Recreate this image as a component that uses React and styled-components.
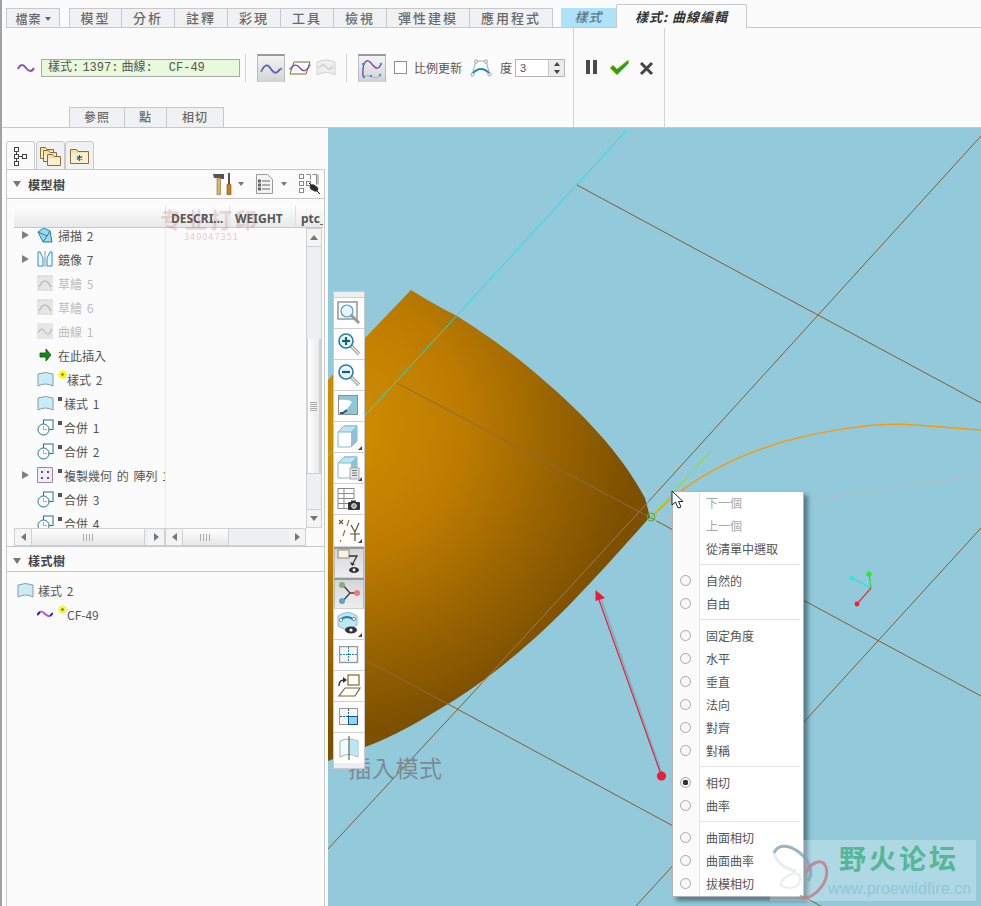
import React from "react";
import styled, { createGlobalStyle } from "styled-components";

const CJK = `"Noto Sans CJK TC", "Noto Sans", sans-serif`;

const GlobalStyle = createGlobalStyle`
  html, body { margin: 0; padding: 0; background: #fbfbfb; }
  body { font-family: ${CJK}; font-size: 12px; color: #4d4d4d; }
`;

const TABS = ["模型", "分析", "註釋", "彩現", "工具", "檢視"];
const WIDE_TABS = ["彈性建模", "應用程式"];

const TREE_ROWS = [
  { label: "掃描 2", icon: "sweep", arrow: true },
  { label: "鏡像 7", icon: "mirror", arrow: true },
  { label: "草繪 5", icon: "sketch", off: true },
  { label: "草繪 6", icon: "sketch", off: true },
  { label: "曲線 1", icon: "curve", off: true },
  { label: "在此插入", icon: "insert" },
  { label: "樣式 2", icon: "style", mark: "new" },
  { label: "樣式 1", icon: "style", mark: "dot" },
  { label: "合併 1", icon: "merge", mark: "dot" },
  { label: "合併 2", icon: "merge", mark: "dot" },
  { label: "複製幾何 的 陣列 1", icon: "pattern", mark: "dot", arrow: true },
  { label: "合併 3", icon: "merge", mark: "dot" },
  { label: "合併 4", icon: "merge", mark: "dot" },
];

const MENU = [
  [
    { label: "下一個", off: true },
    { label: "上一個", off: true },
    { label: "從清單中選取" },
  ],
  [
    { label: "自然的", radio: true },
    { label: "自由", radio: true },
  ],
  [
    { label: "固定角度", radio: true },
    { label: "水平", radio: true },
    { label: "垂直", radio: true },
    { label: "法向", radio: true },
    { label: "對齊", radio: true },
    { label: "對稱", radio: true },
  ],
  [
    { label: "相切", radio: true, on: true },
    { label: "曲率", radio: true },
  ],
  [
    { label: "曲面相切", radio: true },
    { label: "曲面曲率", radio: true },
    { label: "拔模相切", radio: true },
  ],
];

/* ---------- icons ---------- */

const Wave = ({ w = 18, h = 10, color = "#8a4fb0", sw = 2 }) => (
  <svg width={w} height={h} viewBox="0 0 18 10">
    <path d="M1 6C3 1 6 1 9 5s6 4 8 0" fill="none" stroke={color} strokeWidth={sw} />
  </svg>
);

const CurveNode = () => (
  <svg width="16" height="8" viewBox="0 0 16 8">
    <path d="M1 4C3 1 5 1 7 3s4 4 6 3" fill="none" stroke="#c050d0" strokeWidth="1.8" />
    <path d="M0 5L3 2M13 6L16 3" stroke="#1a1ae0" strokeWidth="1.8" />
  </svg>
);

const NewStar = () => (
  <svg width="9" height="9" viewBox="0 0 9 9">
    <path d="M4.500 0v9M0 4.500h9M1.200 1.200l6.600 6.600M7.800 1.200L1.200 7.800" stroke="#f8f000" strokeWidth="1.3" />
    <rect x="3.500" y="3.500" width="2" height="2" fill="#5a5a20" />
  </svg>
);

const WaveDots = () => (
  <svg width="24" height="16" viewBox="0 0 24 16">
    <path d="M3 9C6 3 9 3 12 8s6 5 9 0" fill="none" stroke="#7d45b0" strokeWidth="1.6" />
    <g fill="#2a9fd8">
      <circle cx="2.5" cy="10" r="1.2" />
      <circle cx="9" cy="5" r="1.2" />
      <circle cx="15" cy="11" r="1.2" />
      <circle cx="22" cy="8" r="1.2" />
    </g>
  </svg>
);

const PlaneCurve = () => (
  <svg width="22" height="16" viewBox="0 0 22 16">
    <path d="M5 2H21L17 14H1Z" fill="none" stroke="#8a6a2c" strokeWidth="1" />
    <path d="M1 9C5 4 8 4 11 8s6 4 10-3" fill="none" stroke="#7d45b0" strokeWidth="1.3" />
    <circle cx="1.5" cy="9" r="1" fill="#2a9fd8" />
    <circle cx="20.5" cy="5" r="1" fill="#2a9fd8" />
  </svg>
);

const SurfaceCurve = () => (
  <svg width="20" height="18" viewBox="0 0 20 18">
    <path d="M1 3Q10 -1 19 3V16Q10 11 1 16Z" fill="#eee" stroke="#d2d2d2" />
    <path d="M3 9C6 5 8 5 10 8s5 3 7 -1" fill="none" stroke="#c9c9c9" strokeWidth="1.3" />
  </svg>
);

const ControlCurve = () => (
  <svg width="24" height="24" viewBox="0 0 24 24">
    <path d="M3 20C2 4 7 1 11 6s7 8 10 1" fill="none" stroke="#7d45b0" strokeWidth="1.4" />
    <path d="M3 20c6-5 12 5 18-2" fill="none" stroke="#bbb" strokeWidth="1.4" />
    <g fill="#2a9fd8">
      <circle cx="3" cy="7" r="1.2" />
      <circle cx="21" cy="7" r="1.2" />
      <circle cx="4" cy="20" r="1.2" />
      <circle cx="11" cy="19" r="1.2" />
      <circle cx="20" cy="18" r="1.2" />
    </g>
  </svg>
);

const DegreeIcon = () => (
  <svg width="22" height="18" viewBox="0 0 22 18">
    <path d="M2 16L6 2H16L20 16" fill="none" stroke="#aaa" />
    <path d="M2 15Q11 5 20 15" fill="none" stroke="#1f8ac0" strokeWidth="1.8" />
    <g fill="#fff" stroke="#999">
      <circle cx="2.5" cy="15.5" r="1.6" />
      <circle cx="6" cy="2.5" r="1.6" />
      <circle cx="16" cy="2.5" r="1.6" />
      <circle cx="19.5" cy="15.5" r="1.6" />
    </g>
  </svg>
);

const TreeTabIcon = () => (
  <svg width="15" height="20" viewBox="0 0 15 20">
    <g fill="#fff" stroke="#444">
      <rect x="1.5" y="1.5" width="4" height="4" />
      <rect x="1.5" y="8.5" width="4" height="4" />
      <rect x="9.5" y="8.5" width="4" height="4" />
      <rect x="1.5" y="15.5" width="4" height="4" />
    </g>
    <path d="M3.5 5.5v3M3.5 12.5v3M5.5 10.5h4" stroke="#444" />
  </svg>
);

const Folder = ({ x = 0, y = 0 }) => (
  <g transform={`translate(${x} ${y})`}>
    <path d="M.5 2.5h5l1.5 2h6.5v9H.5Z" fill="#f7dfa8" stroke="#8a6d3b" />
    <path d="M1 6h12v7H1Z" fill="#fbeecb" />
  </g>
);

const FoldersIcon = () => (
  <svg width="21" height="21" viewBox="0 0 21 21">
    <Folder />
    <Folder x={3} y={3} />
    <Folder x={7} y={7} />
  </svg>
);

const FolderStarIcon = () => (
  <svg width="19" height="17" viewBox="0 0 19 17">
    <path d="M.5 2.5h6l1.5 2h10.5v12H.5Z" fill="#f7dfa8" stroke="#8a6d3b" />
    <path d="M1 6h17v10H1Z" fill="#fcefcf" />
    <path d="M9.5 8v6M6.8 9.5l5.4 3M12.2 9.5l-5.4 3" stroke="#0d5f8a" strokeWidth="1.2" />
  </svg>
);

const ToolsIcon = () => (
  <svg width="20" height="22" viewBox="0 0 20 22">
    <path d="M0 1h11v5H8L7 5H1Z" fill="#555" />
    <rect x="4" y="5" width="3.6" height="17" fill="#d7b56d" stroke="#8a6d3b" strokeWidth=".6" />
    <rect x="15" y="0" width="2" height="11" fill="#555" />
    <rect x="14" y="11" width="4" height="11" rx="1" fill="#c77f1a" stroke="#7a4e10" strokeWidth=".6" />
  </svg>
);

const ListIcon = () => (
  <svg width="17" height="20" viewBox="0 0 17 20">
    <path d="M.5.5h11l5 5v14H.5Z" fill="#f4f4f4" stroke="#9a9a9a" />
    <path d="M6 7h8M6 11h8M6 15h8" stroke="#666" />
    <g fill="none" stroke="#666">
      <rect x="2.5" y="6" width="2" height="2" />
      <rect x="2.5" y="10" width="2" height="2" />
      <rect x="2.5" y="14" width="2" height="2" />
    </g>
  </svg>
);

const TreeEyeIcon = () => (
  <svg width="22" height="20" viewBox="0 0 22 20">
    <g fill="#fff" stroke="#8a8a8a">
      <rect x=".5" y=".5" width="4" height="4" />
      <rect x=".5" y="7.5" width="4" height="4" />
      <rect x=".5" y="14.5" width="4" height="4" />
      <rect x="7.5" y="7.5" width="4" height="4" />
      <path d="M7.5.5h4v5M13.5.5h4v10M19 .5v10" fill="none" />
    </g>
    <ellipse cx="15" cy="14" rx="4.5" ry="3" fill="#333" transform="rotate(30 15 14)" />
    <path d="M10 9l11 11" stroke="#111" />
  </svg>
);

const NODE_ICONS = {
  sweep: (
    <svg width="16" height="16" viewBox="0 0 16 16">
      <path d="M1 5L7 1l6 3 2 11H6Z" fill="#9ed8ee" stroke="#1f7fa8" />
      <path d="M1 5l9 4 3-5M10 9l-4 6" fill="none" stroke="#1f7fa8" />
    </svg>
  ),
  mirror: (
    <svg width="16" height="16" viewBox="0 0 16 16">
      <path d="M1 15V1h2l3 6v8Z" fill="#eaf7fc" stroke="#2b93bd" />
      <path d="M15 15V1h-2l-3 6v8Z" fill="#eaf7fc" stroke="#2b93bd" />
      <path d="M8 0v16" stroke="#999" />
    </svg>
  ),
  sketch: (
    <svg width="16" height="16" viewBox="0 0 16 16">
      <rect width="16" height="16" fill="#e6e6e6" />
      <path d="M1.500 1.500h13M1.500 14.500h13" stroke="#c8c8c8" strokeDasharray="1 3" />
      <path d="M2 12Q8 0 14 12" fill="none" stroke="#c4c0ae" strokeWidth="1.6" />
    </svg>
  ),
  curve: (
    <svg width="16" height="16" viewBox="0 0 16 16">
      <rect width="16" height="16" fill="#e6e6e6" />
      <path d="M1 10c3-6 5-4 7-1s5 3 7-3" fill="none" stroke="#c4c0ae" strokeWidth="1.2" />
    </svg>
  ),
  insert: (
    <svg width="16" height="16" viewBox="0 0 16 16">
      <path d="M3 6h6V2l5 6-5 6v-4H3Z" fill="#118a11" stroke="#0a4f0a" strokeWidth=".8" />
    </svg>
  ),
  style: (
    <svg width="17" height="16" viewBox="0 0 17 16">
      <path d="M1 3Q8.5 0 16 3V15Q8.5 11 1 15Z" fill="#c9ecfa" stroke="#8b9aa2" />
    </svg>
  ),
  merge: (
    <svg width="17" height="17" viewBox="0 0 17 17">
      <rect x="6.5" y="1" width="9.5" height="9.5" fill="#fff" stroke="#25708f" />
      <circle cx="6.5" cy="10.5" r="5.5" fill="#fff" stroke="#25708f" />
      <path d="M6.5 7v3.5H10" fill="none" stroke="#8fb7c6" />
    </svg>
  ),
  pattern: (
    <svg width="16" height="16" viewBox="0 0 16 16">
      <path d="M.5.5h15v15H.5Z" fill="#f2eef8" stroke="#9a8aa8" />
      <path d="M4 4h2v2H4ZM10 4h2v2h-2ZM4 10h2v2H4ZM10 10h2v2h-2Z" fill="#6a4aa0" />
    </svg>
  ),
};

const Mag = ({ sign }) => (
  <svg width="24" height="24" viewBox="0 0 24 24">
    <path d="M14 14l8 8" stroke="#999" strokeWidth="3.4" />
    <path d="M14 14l8 8" stroke="#eee" strokeWidth="1.4" />
    <circle cx="9" cy="9" r="7" fill="#e8f7fc" stroke="#2b7d9d" strokeWidth="1.6" />
    {sign && <path d="M5 9h8" stroke="#155f80" strokeWidth="2.2" />}
    {sign === "+" && <path d="M9 5v8" stroke="#155f80" strokeWidth="2.2" />}
  </svg>
);

const Corner = () => <path d="M26 26h-4l4-4Z" fill="#444" />;

const TOOL_ICONS = [
  <svg width="24" height="24" viewBox="0 0 24 24" key="fit">
    <rect x="1" y="1" width="19" height="17" fill="#fff" stroke="#8e8e8e" strokeWidth="1.4" />
    <path d="M14 14l8 8" stroke="#999" strokeWidth="3" />
    <circle cx="10" cy="10" r="6" fill="#e4f5fb" stroke="#5a9ab5" strokeWidth="1.2" />
  </svg>,
  <Mag sign="+" key="in" />,
  <Mag sign="-" key="out" />,
  <svg width="22" height="22" viewBox="0 0 22 22" key="view">
    <rect x=".5" y=".5" width="19" height="19" fill="#8fc6d8" stroke="#8e8e8e" />
    <path d="M1 5Q11 4 14 7L6 19H1Z" fill="#fff" />
    <path d="M15 7L7 18" fill="none" stroke="#8fc6d8" strokeWidth="1" />
    <path d="M9 15L5 18H2" fill="none" stroke="#135a7c" strokeWidth="2" />
  </svg>,
  <svg width="26" height="26" viewBox="0 0 26 26" key="cube">
    <path d="M2 8L8 2H21V17L15 23H2Z" fill="#fff" stroke="#7fb9d2" />
    <path d="M2 8H15L21 2H8Z" fill="#bfe4f2" stroke="#7fb9d2" />
    <path d="M15 8V23L21 17V2Z" fill="#8cc3d8" />
    <Corner />
  </svg>,
  <svg width="26" height="26" viewBox="0 0 26 26" key="cube-list">
    <path d="M2 8L8 2H21V17L15 23H2Z" fill="#fff" stroke="#7fb9d2" />
    <path d="M2 8H15L21 2H8Z" fill="#bfe4f2" stroke="#7fb9d2" />
    <path d="M15 8V14L21 14V2Z" fill="#8cc3d8" />
    <rect x="14" y="13" width="9" height="11" fill="#e6e6e6" stroke="#aaa" />
    <path d="M16 15.5h5M16 18h5M16 20.5h5" stroke="#777" />
    <Corner />
  </svg>,
  <svg width="26" height="26" viewBox="0 0 26 26" key="table">
    <path d="M2 2.5h16M2 7.5h16M2 12.5h16M2 17.5h14M2 22.5h10M2 2v21M8 3v20M18 2v11" stroke="#8b8b8b" fill="none" />
    <rect x="12" y="16" width="12" height="8" rx="1" fill="#333" />
    <rect x="15" y="14.5" width="5" height="2" fill="#333" />
    <circle cx="18" cy="20" r="2.4" fill="#999" stroke="#fff" strokeWidth=".8" />
  </svg>,
  <svg width="26" height="26" viewBox="0 0 26 26" key="datum">
    <path d="M3 3l4 4M7 3l-4 4" stroke="#6d5a2c" strokeWidth="1.2" />
    <path d="M13 3l-2 6M9 13l-2 6M5 23l-1 2" stroke="#9a7a2c" strokeWidth="1.2" />
    <path d="M15 8l4 7 4-9M19 15v9M14 17h10" fill="none" stroke="#5f4e25" strokeWidth="1.2" />
    <Corner />
  </svg>,
  <svg width="25" height="25" viewBox="0 0 25 25" key="box-eye">
    <rect x="1" y="1" width="11" height="8" fill="#fdf1d8" stroke="#8a8a8a" />
    <path d="M12 7h8L15 16" fill="none" stroke="#333" strokeWidth="1.3" />
    <path d="M13 13l2 4 3-2Z" fill="#333" />
    <ellipse cx="17" cy="21" rx="5" ry="3" fill="#333" />
    <circle cx="17" cy="21" r="1.4" fill="#fff" />
  </svg>,
  <svg width="24" height="24" viewBox="0 0 24 24" key="nodes">
    <path d="M5 3l8 9h8M13 12l-8 9" stroke="#444" strokeWidth="1.4" fill="none" />
    <circle cx="5" cy="4" r="3" fill="#7fb07a" />
    <circle cx="20" cy="12" r="3" fill="#e87c78" />
    <circle cx="5" cy="20" r="3" fill="#5fa3c8" />
  </svg>,
  <svg width="26" height="26" viewBox="0 0 26 26" key="surf-eye">
    <path d="M2 5Q12 -2 21 5V14L12 20 2 15Z" fill="#bfe6f5" stroke="#8fb9ca" />
    <path d="M4 9Q11 3 18 9" fill="none" stroke="#1f7fa8" strokeWidth="1.8" />
    <circle cx="5" cy="9" r="1.6" fill="#fff" stroke="#888" />
    <circle cx="18" cy="8" r="1.6" fill="#fff" stroke="#888" />
    <ellipse cx="15" cy="19" rx="6" ry="3.4" fill="#333" />
    <circle cx="15" cy="19" r="1.6" fill="#fff" />
    <Corner />
  </svg>,
  <svg width="20" height="18" viewBox="0 0 20 18" key="plane">
    <rect x=".5" y=".5" width="18" height="16" fill="#f6f6f6" stroke="#999" strokeWidth="1.4" />
    <path d="M1 8.5h17M9.5 1v15" stroke="#1c88bd" strokeDasharray="2 1" />
  </svg>,
  <svg width="24" height="24" viewBox="0 0 24 24" key="rotate">
    <rect x="11" y="1" width="11" height="10" fill="#fff" stroke="#7d6635" strokeWidth="1.2" />
    <path d="M8 14h15l-5 8H2Z" fill="#fff" stroke="#7d6635" strokeWidth="1.2" />
    <path d="M2 12Q2 6 7 6" fill="none" stroke="#333" strokeWidth="1.4" />
    <path d="M6 3l4 3-4 3Z" fill="#333" />
  </svg>,
  <svg width="20" height="18" viewBox="0 0 20 18" key="quad">
    <rect x=".5" y=".5" width="18" height="16" fill="#f6f6f6" stroke="#999" />
    <rect x="9.5" y="8.5" width="9" height="8" fill="#8fd4f2" stroke="#135a7c" />
    <path d="M1 8.5h17M9.5 1v15" stroke="#135a7c" strokeDasharray="2 1" />
  </svg>,
  <svg width="20" height="24" viewBox="0 0 20 24" key="surf-line">
    <path d="M1 5Q10 1 19 5V21Q10 16 1 21Z" fill="#f2fbfe" stroke="#a0b0b8" />
    <path d="M10.500 4Q15 4 18.500 5.500V20Q15 17.500 10.500 17.500Z" fill="#b7e6f8" />
    <path d="M10 0V24" stroke="#4a4a2a" />
  </svg>,
];

/* ---------- page ---------- */

const Page = styled.div`
  width: 981px;
  height: 906px;
  overflow: hidden;
  display: flex;
  flex-direction: column;
  border-left: 2px solid #a2a2a2;
  box-sizing: border-box;
  background: #fbfbfb;
`;

const Head = styled.header`
  padding-left: 4px;
  border-bottom: 1px solid #c6c8ca;
`;

const TabRow = styled.div`
  display: flex;
  align-items: flex-end;
  height: 27px;
  border-bottom: 1px solid #c6c8ca;
`;

const FileTab = styled.div`
  width: 54px;
  height: 19px;
  box-sizing: border-box;
  border: 1px solid #c6c8ca;
  border-bottom: 0;
  background: #f0f1f2;
  display: flex;
  align-items: center;
  justify-content: center;
  gap: 3px;
  margin-right: 9px;
  color: #6a6a6a;
  font-size: 12px;
  font-weight: 500;
  letter-spacing: 1px;
  &::after {
    content: "";
    border: 3px solid transparent;
    border-top: 4px solid #666;
    margin-top: 4px;
  }
`;

const Tab = styled.div`
  width: ${(p) => p.$w}px;
  height: 19px;
  box-sizing: border-box;
  border: 1px solid #c6c8ca;
  border-left-width: ${(p) => (p.$first ? 1 : 0)}px;
  border-bottom: 0;
  background: #f0f1f2;
  text-align: center;
  line-height: 18px;
  color: #6a6a6a;
  font-size: 13px;
  font-weight: 500;
  letter-spacing: 2px;
`;

const ContextTab = styled.div`
  margin-left: 8px;
  width: 55px;
  height: 19px;
  background: #ade2fb;
  text-align: center;
  line-height: 18px;
  color: #647480;
  font-size: 13px;
  font-weight: 500;
  font-style: italic;
  letter-spacing: 1px;
`;

const ActiveTab = styled.div`
  width: 131px;
  height: 24px;
  box-sizing: border-box;
  margin-bottom: -1px;
  border: 1px solid #c6c8ca;
  border-bottom: 0;
  border-radius: 2px 2px 0 0;
  background: #fbfbfb;
  text-align: center;
  line-height: 23px;
  color: #333;
  font-size: 13px;
  font-weight: 700;
  font-style: italic;
  letter-spacing: 1px;
`;

const RibbonBody = styled.div`
  display: flex;
  height: 99px;
`;

const MainGroup = styled.div`
  width: 567px;
  display: flex;
  flex-direction: column;
  border-right: 1px solid #d2d3d4;
`;

const Controls = styled.div`
  flex: 1;
  display: flex;
  align-items: center;
  padding-left: 11px;
`;

const StatusField = styled.div`
  width: 199px;
  height: 18px;
  margin-left: 6px;
  box-sizing: border-box;
  border: 1px solid #a9a9a9;
  background: #e9f9dc;
  padding-left: 6px;
  line-height: 16px;
  font-size: 12px;
  font-family: "Liberation Mono", ${CJK};
  word-spacing: -4px;
  color: #555;
  white-space: pre;
`;

const Sep = styled.div`
  width: 1px;
  height: 28px;
  background: #d5d6d7;
  margin: 0 ${(p) => p.$r}px 0 ${(p) => p.$l}px;
`;

const IconSlot = styled.div`
  width: ${(p) => p.$w}px;
  margin-left: ${(p) => p.$ml || 0}px;
  display: flex;
  align-items: center;
  justify-content: center;
`;

const PressedBtn = styled.div`
  width: 28px;
  height: 28px;
  box-sizing: border-box;
  border-top: 2px solid #9a9a9a;
  border-left: 1px solid #bbb;
  border-right: 1px solid #bbb;
  background: linear-gradient(#f4f4f5, #d2d3d5);
  display: flex;
  align-items: center;
  justify-content: center;
`;

const CheckBox = styled.div`
  width: 13px;
  height: 13px;
  margin-left: 8px;
  border: 1px solid #8e8e8e;
  box-sizing: border-box;
  background: #fff;
`;

const Label = styled.span`
  margin-left: ${(p) => p.$ml}px;
  font-size: 12px;
  color: #555;
  white-space: nowrap;
`;

const Spinner = styled.div`
  margin-left: 3px;
  width: 50px;
  height: 18px;
  box-sizing: border-box;
  border: 1px solid #b5b5b5;
  background: #fff;
  display: flex;
  font-family: "Liberation Sans", sans-serif;
  font-size: 11px;
  line-height: 16px;
  color: #555;
`;

const SpinValue = styled.div`
  flex: 1;
  padding-left: 4px;
`;

const SpinButtons = styled.div`
  width: 15px;
  border-left: 1px solid #c6c6c6;
  background: #ececec;
  display: flex;
  flex-direction: column;
  align-items: center;
  justify-content: space-around;
`;

const SpinUp = styled.i`
  border: 3px solid transparent;
  border-top: 0;
  border-bottom: 4px solid #444;
`;

const SpinDown = styled.i`
  border: 3px solid transparent;
  border-bottom: 0;
  border-top: 4px solid #444;
`;

const SubTabs = styled.div`
  display: flex;
  height: 20px;
  padding-left: 63px;
`;

const SubTab = styled.div`
  width: ${(p) => p.$w}px;
  box-sizing: border-box;
  border: 1px solid #c6c8ca;
  border-bottom: 0;
  border-left-width: ${(p) => (p.$first ? 1 : 0)}px;
  background: #f0f1f2;
  text-align: center;
  line-height: 18px;
  font-size: 12px;
  font-weight: 500;
  letter-spacing: 1px;
  color: #6a6a6a;
`;

const ConfirmGroup = styled.div`
  width: 91px;
  height: 100%;
  box-sizing: border-box;
  border-right: 1px solid #d2d3d4;
  padding: 31px 0 0 11px;
  display: flex;
  align-items: flex-start;
`;

const Body = styled.main`
  flex: 1;
  min-height: 0;
  display: flex;
  padding-left: 4px;
`;

const Side = styled.aside`
  width: 319px;
  margin-right: 3px;
  padding-top: 13px;
  flex-shrink: 0;
  display: flex;
  flex-direction: column;
`;

const SideTabs = styled.div`
  display: flex;
  height: 29px;
  margin-bottom: -1px;
  position: relative;
`;

const SideTab = styled.div`
  width: 29px;
  height: 29px;
  box-sizing: border-box;
  border: 1px solid #c6c8ca;
  border-bottom: ${(p) => (p.$active ? "1px solid #fbfbfb" : "1px solid #c6c8ca")};
  border-radius: 3px 3px 0 0;
  margin-right: ${(p) => (p.$active ? 1 : 0)}px;
  background: ${(p) => (p.$active ? "#fbfbfb" : "#f0f1f2")};
  display: flex;
  align-items: center;
  justify-content: center;
`;

const SidePanel = styled.div`
  flex: 1;
  min-height: 0;
  border: 1px solid #c6c8ca;
  border-bottom: 0;
  display: flex;
  flex-direction: column;
  position: relative;
`;

const SectionHead = styled.div`
  height: ${(p) => p.$h}px;
  flex-shrink: 0;
  box-sizing: border-box;
  display: flex;
  align-items: center;
  padding: ${(p) => p.$pt || 0}px 0 0 6px;
  border-bottom: 1px solid #c6c8ca;
  font-size: 12px;
  font-weight: 700;
  letter-spacing: .5px;
  color: #444;
  &::before {
    content: "";
    border: 4px solid transparent;
    border-top: 6px solid #777;
    border-bottom: 0;
    margin-right: 7px;
  }
`;

const SectionTools = styled.div`
  margin-left: auto;
  display: flex;
  align-items: center;
  padding-right: 3px;
`;

const SmallCaret = styled.i`
  border: 3.5px solid transparent;
  border-top: 4px solid #777;
  border-bottom: 0;
  margin: 0 ${(p) => p.$r}px 0 ${(p) => p.$l}px;
`;

const TreeArea = styled.div`
  height: 348px;
  flex-shrink: 0;
  padding: 7px 1px 0 7px;
  display: flex;
  flex-direction: column;
  border-bottom: 1px solid #c6c8ca;
  box-sizing: border-box;
`;

const ColumnHead = styled.div`
  height: 22px;
  flex-shrink: 0;
  display: grid;
  grid-template-columns: 151px 64px 66px 1fr;
  background: linear-gradient(#fdfdfd, #e8e9ea);
  border-bottom: 1px solid #c6c8ca;
  box-sizing: border-box;
  font-family: "Noto Sans", sans-serif;
  font-size: 12px;
  font-weight: 700;
  color: #555;
  line-height: 25px;
  overflow: hidden;
`;

const ColumnCell = styled.div`
  border-left: 1px solid #dfe0e1;
  padding-left: 5px;
  white-space: nowrap;
  overflow: hidden;
`;

const ColumnBlank = styled.div``;

const TreeBody = styled.div`
  height: 300px;
  display: grid;
  grid-template-columns: 151px 141px 16px;
  flex-shrink: 0;
`;

const NameColumn = styled.div`
  overflow: hidden;
  padding-top: 1px;
`;

const TreeRow = styled.div`
  height: 24px;
  margin-top: ${(p) => (p.$first ? -6 : 0)}px;
  display: flex;
  align-items: center;
  white-space: nowrap;
  font-size: 12px;
  word-spacing: 2px;
  color: ${(p) => (p.$off ? "#bcbcbc" : "#555")};
`;

const Expander = styled.div`
  width: 23px;
  padding-left: 8px;
  box-sizing: border-box;
  flex-shrink: 0;
  &::before {
    content: "";
    display: ${(p) => (p.$show ? "block" : "none")};
    width: 0;
    border: 4.5px solid transparent;
    border-left: 7px solid #808080;
    border-right: 0;
  }
`;

const NodeIcon = styled.div`
  width: 21px;
  flex-shrink: 0;
  display: flex;
  align-items: center;
  opacity: ${(p) => (p.$off ? 0.9 : 1)};
`;

const DotMark = styled.i`
  width: 4px;
  height: 4px;
  background: #555;
  align-self: flex-start;
  margin: 6px 2px 0 0;
  flex-shrink: 0;
`;

const NewMark = styled.span`
  align-self: flex-start;
  margin: 3px 0 0 0;
  width: 9px;
  height: 9px;
  line-height: 0;
  flex-shrink: 0;
`;

const EmptyColumn = styled.div`
  border-left: 1px solid #e6e9ee;
`;

const VScroll = styled.div`
  background: #eeeff0;
  border: 1px solid #d0d1d2;
  box-sizing: border-box;
  display: flex;
  flex-direction: column;
  align-items: stretch;
`;

const ScrollBtn = styled.div`
  height: ${(p) => p.$h || 17}px;
  background: #f4f4f5;
  display: flex;
  align-items: center;
  justify-content: center;
  flex-shrink: 0;
  border-bottom: ${(p) => (p.$top ? "1px solid #d0d1d2" : 0)};
  border-top: ${(p) => (p.$bottom ? "1px solid #d0d1d2" : 0)};
  margin-top: ${(p) => (p.$bottom ? "auto" : 0)};
`;

const ThumbV = styled.div`
  margin-top: 92px;
  height: 135px;
  background: linear-gradient(90deg, #fff, #e9e9e9);
  border: 1px solid #d0d1d2;
  border-width: 0 2px 1px 1px;
  box-sizing: border-box;
  display: flex;
  align-items: center;
  justify-content: center;
  &::after {
    content: "";
    width: 7px;
    height: 9px;
    background: repeating-linear-gradient(#aaa 0 1px, transparent 1px 2px);
  }
`;

const HScrollRow = styled.div`
  display: grid;
  grid-template-columns: 151px 141px;
  height: 19px;
`;

const HScroll = styled.div`
  display: flex;
  align-items: stretch;
  background: #eeeff0;
  border: 1px solid #d0d1d2;
  box-sizing: border-box;
`;

const HBtn = styled.div`
  width: 16px;
  flex-shrink: 0;
  background: #f4f4f5;
  display: flex;
  align-items: center;
  justify-content: center;
  margin-left: ${(p) => (p.$end ? "auto" : 0)};
`;

const ThumbH = styled.div`
  width: ${(p) => p.$w}px;
  background: linear-gradient(#fff, #e6e6e6);
  border: 1px solid #d0d1d2;
  border-width: 0 1px;
  display: flex;
  align-items: center;
  justify-content: center;
  &::after {
    content: "";
    width: 11px;
    height: 7px;
    background: repeating-linear-gradient(90deg, #aaa 0 1px, transparent 1px 3px);
  }
`;

const ArrowUp = styled.i`
  border: 4px solid transparent;
  border-top: 0;
  border-bottom: 5px solid #777;
`;

const ArrowDown = styled.i`
  border: 4px solid transparent;
  border-bottom: 0;
  border-top: 5px solid #777;
`;

const ArrowLeft = styled.i`
  border: 4px solid transparent;
  border-left: 0;
  border-right: 5px solid #777;
`;

const ArrowRight = styled.i`
  border: 4px solid transparent;
  border-right: 0;
  border-left: 5px solid #777;
`;

const StyleTree = styled.div`
  padding: 6px 0 0 10px;
`;

const StyleRow = styled.div`
  height: 24px;
  display: flex;
  align-items: center;
  padding-left: ${(p) => p.$indent}px;
  font-size: 12px;
  word-spacing: 2px;
  color: #555;
`;

const StampWide = styled.div`
  position: absolute;
  left: 153px;
  top: 32px;
  font-family: "Noto Sans CJK SC", sans-serif;
  font-size: 22px;
  font-weight: 700;
  letter-spacing: 3px;
  color: rgba(190, 90, 90, 0.22);
  white-space: nowrap;
`;

const StampQQ = styled.div`
  position: absolute;
  left: 177px;
  top: 63px;
  font-family: "DejaVu Sans", sans-serif;
  font-size: 8px;
  letter-spacing: 1px;
  color: #ecc6d0;
`;

const Viewport = styled.section`
  flex: 1;
  position: relative;
  overflow: hidden;
  background: #92cadc;
`;

const Scene = styled.svg`
  display: block;
  width: 653px;
  height: 779px;
`;

const FloatBar = styled.div`
  position: absolute;
  left: 5px;
  top: 163px;
  width: 32px;
  height: 478px;
  box-sizing: border-box;
  border: 1px solid #c8c9ca;
  background: #fff;
  display: flex;
  flex-direction: column;
  &::before,
  &::after {
    content: "";
    background: #eeeeef;
    height: 5px;
    flex-shrink: 0;
  }
`;

const FloatBtn = styled.div`
  flex: 1;
  box-sizing: border-box;
  border-top: 1px solid #cfd0d1;
  display: flex;
  align-items: center;
  justify-content: center;
  background: ${(p) => (p.$pressed ? "linear-gradient(#d3d4d6, #eeeeef)" : "#fff")};
  box-shadow: ${(p) => (p.$pressed ? "inset 0 2px 0 #9a9a9a, inset 1px 0 0 #bbb, inset -1px 0 0 #bbb" : "none")};
`;

const Hint = styled.div`
  position: absolute;
  left: 20px;
  top: 622px;
  font-size: 23px;
  letter-spacing: .7px;
  color: #7d8a92;
  white-space: nowrap;
`;

const Menu = styled.div`
  position: absolute;
  left: 344px;
  top: 363px;
  width: 132px;
  height: 406px;
  box-sizing: border-box;
  border: 1px solid #b4b4b4;
  background: linear-gradient(90deg, #fbfbfb 26px, #e6e6e6 26px, #e6e6e6 27px, #fff 27px);
  box-shadow: 4px 4px 4px rgba(40, 60, 70, 0.55);
`;

const MenuItem = styled.div`
  height: 23px;
  box-sizing: border-box;
  padding: 0 0 2px 7px;
  display: flex;
  align-items: center;
  font-size: 12px;
  color: ${(p) => (p.$off ? "#a8a8a8" : "#555")};
  white-space: nowrap;
`;

const Radio = styled.i`
  width: 11px;
  height: 11px;
  box-sizing: border-box;
  border-radius: 50%;
  border: 1.5px solid #a8a8a8;
  background: ${(p) => (p.$on ? "radial-gradient(circle, #333 0 2.6px, #f1f1f1 3px)" : "#f7f7f7")};
  visibility: ${(p) => (p.$hide ? "hidden" : "visible")};
  flex-shrink: 0;
  margin-right: 15px;
`;

const MenuSep = styled.div`
  height: 1px;
  margin: 3px 3px 5px 27px;
  background: #e4e4e4;
`;

const Pointer = styled.svg`
  position: absolute;
  left: 343px;
  top: 362px;
`;

const Watermark = styled.div`
  position: absolute;
  left: 442px;
  top: 712px;
  width: 206px;
  height: 61px;
  background: rgba(255, 255, 255, 0.27);
  display: flex;
  flex-direction: column;
  padding-left: 58px;
  box-sizing: border-box;
`;

const BrandName = styled.div`
  margin-left: 11px;
  margin-top: 1px;
  font-family: "Noto Sans CJK SC", sans-serif;
  font-size: 27px;
  line-height: 34px;
  font-weight: 700;
  letter-spacing: 3px;
  color: #55b698;
  white-space: nowrap;
`;

const BrandUrl = styled.div`
  margin-top: 4px;
  font-family: "Liberation Sans", sans-serif;
  font-size: 16px;
  line-height: 20px;
  letter-spacing: .1px;
  color: #8fc6d8;
  white-space: nowrap;
`;

const BrandLogo = styled.svg`
  position: absolute;
  left: 2px;
  top: 3px;
`;

const SceneDrawing = () => (
  <Scene viewBox="328 127 653 779">
    <defs>
      <radialGradient id="metal" gradientUnits="userSpaceOnUse" cx="330" cy="425" r="305">
        <stop offset="0" stopColor="#d29000" />
        <stop offset=".45" stopColor="#bc7b00" />
        <stop offset=".75" stopColor="#986300" />
        <stop offset="1" stopColor="#7d5000" />
      </radialGradient>
    </defs>
    <path
      d="M328 379L365 337L411 289Q435 304 457 315C490 336 515 354 540 376C580 410 620 450 645 497L650 516C615 555 565 612 528 643C500 668 470 690 448 703C420 720 395 735 365 746L328 760Z"
      fill="url(#metal)"
    />
    <g fill="none" strokeWidth="1">
      <path d="M627 129L328 455" stroke="#22dede" />
      <path d="M577 184L981 402" stroke="#8a5a28" />
      <path d="M981 135L649 500" stroke="#8a5a28" />
      <path d="M649 500L482 682" stroke="#a07a58" />
      <path d="M482 682L328 848" stroke="#8a5a28" />
      <path d="M397 382L651 517" stroke="#8a6a4a" />
      <path d="M651 517L981 695" stroke="#8a5a28" />
      <path d="M328 639L448 703" stroke="#8d6a4a" />
      <path d="M448 703L830 910" stroke="#8a5a28" />
      <path d="M981 527L636 905" stroke="#8a5a28" />
      <path d="M650 520L803 500L981 474" stroke="#bdb8c0" />
      <path d="M651 517C685 480 735 455 786 440C830 428 880 421 915 424L981 429" stroke="#f59a10" strokeWidth="1.4" />
      <path d="M651 516L711 450" stroke="#90dc10" />
      <circle cx="651" cy="516" r="4" stroke="#25c04a" />
      <path d="M871 587L869 573" stroke="#22dd22" strokeWidth="1.2" />
      <path d="M871 587L852 577" stroke="#22e0e0" strokeWidth="1.2" />
      <path d="M871 587L857 603" stroke="#e83030" strokeWidth="1.2" />
    </g>
    <circle cx="869" cy="573" r="2.6" fill="#22ee22" />
    <circle cx="852" cy="577" r="2.2" fill="#22e8e8" />
    <circle cx="857" cy="603" r="2.4" fill="#ee2222" />
    <path d="M663 776L599 592" stroke="#7f8f98" strokeOpacity=".45" strokeWidth="2" />
    <path d="M661.5 775L598 596" stroke="#e8203c" strokeWidth="1.2" />
    <path d="M595.5 589L605 597L595.5 600Z" fill="#ea1c34" />
    <circle cx="661.5" cy="775" r="4.6" fill="#ee1c34" />
  </Scene>
);

const App = () => {
  return (
    <>
      <GlobalStyle />
      <Page>
        <Head>
          <TabRow>
            <FileTab>檔案</FileTab>
            {TABS.map((t, i) => (
              <Tab key={t} $w={53} $first={i === 0}>
                {t}
              </Tab>
            ))}
            {WIDE_TABS.map((t) => (
              <Tab key={t} $w={83}>
                {t}
              </Tab>
            ))}
            <ContextTab>樣式</ContextTab>
            <ActiveTab>樣式: 曲線編輯</ActiveTab>
          </TabRow>
          <RibbonBody>
            <MainGroup>
              <Controls>
                <Wave />
                <StatusField>{"樣式: 1397: 曲線:     CF-49"}</StatusField>
                <Sep $l={5} $r={11} />
                <PressedBtn>
                  <WaveDots />
                </PressedBtn>
                <IconSlot $w={22} $ml={4}>
                  <PlaneCurve />
                </IconSlot>
                <IconSlot $w={20} $ml={5}>
                  <SurfaceCurve />
                </IconSlot>
                <Sep $l={10} $r={11} />
                <PressedBtn>
                  <ControlCurve />
                </PressedBtn>
                <CheckBox />
                <Label $ml={7}>比例更新</Label>
                <IconSlot $w={22} $ml={8}>
                  <DegreeIcon />
                </IconSlot>
                <Label $ml={8}>度</Label>
                <Spinner>
                  <SpinValue>3</SpinValue>
                  <SpinButtons>
                    <SpinUp />
                    <SpinDown />
                  </SpinButtons>
                </Spinner>
              </Controls>
              <SubTabs>
                <SubTab $w={56} $first>
                  參照
                </SubTab>
                <SubTab $w={42}>點</SubTab>
                <SubTab $w={57}>相切</SubTab>
              </SubTabs>
            </MainGroup>
            <ConfirmGroup>
              <svg width="72" height="18" viewBox="0 0 72 18">
                <path d="M1 1h4v14H1ZM8 1h4v14H8Z" fill="#4a4a4a" />
                <path d="M25 9l3-3 4 4L43 1l1 3L32 16Z" fill="#2f9a2f" stroke="#c8d820" strokeWidth=".8" />
                <path d="M56 4l11 11M67 4L56 15" stroke="#444" strokeWidth="3" />
              </svg>
            </ConfirmGroup>
          </RibbonBody>
        </Head>
        <Body>
          <Side>
            <SideTabs>
              <SideTab $active>
                <TreeTabIcon />
              </SideTab>
              <SideTab>
                <FoldersIcon />
              </SideTab>
              <SideTab>
                <FolderStarIcon />
              </SideTab>
            </SideTabs>
            <SidePanel>
              <SectionHead $h={29}>
                模型樹
                <SectionTools>
                  <ToolsIcon />
                  <SmallCaret $l={5} $r={12} />
                  <ListIcon />
                  <SmallCaret $l={8} $r={12} />
                  <TreeEyeIcon />
                </SectionTools>
              </SectionHead>
              <TreeArea>
                <ColumnHead>
                  <ColumnBlank />
                  <ColumnCell>DESCRI...</ColumnCell>
                  <ColumnCell>WEIGHT</ColumnCell>
                  <ColumnCell>ptc_</ColumnCell>
                </ColumnHead>
                <TreeBody>
                  <NameColumn>
                    {TREE_ROWS.map((row, i) => (
                      <TreeRow key={row.label + i} $first={i === 0} $off={row.off}>
                        <Expander $show={row.arrow} />
                        <NodeIcon>{NODE_ICONS[row.icon]}</NodeIcon>
                        {row.mark === "dot" && <DotMark />}
                        {row.mark === "new" && (
                          <NewMark>
                            <NewStar />
                          </NewMark>
                        )}
                        {row.label}
                      </TreeRow>
                    ))}
                  </NameColumn>
                  <EmptyColumn />
                  <VScroll>
                    <ScrollBtn $top>
                      <ArrowUp />
                    </ScrollBtn>
                    <ThumbV />
                    <ScrollBtn $bottom>
                      <ArrowDown />
                    </ScrollBtn>
                  </VScroll>
                </TreeBody>
                <HScrollRow>
                  <HScroll>
                    <HBtn>
                      <ArrowLeft />
                    </HBtn>
                    <ThumbH $w={112} />
                    <HBtn $end>
                      <ArrowRight />
                    </HBtn>
                  </HScroll>
                  <HScroll>
                    <HBtn>
                      <ArrowLeft />
                    </HBtn>
                    <ThumbH $w={45} />
                    <HBtn $end>
                      <ArrowRight />
                    </HBtn>
                  </HScroll>
                </HScrollRow>
              </TreeArea>
              <SectionHead $h={25} $pt={3}>
                樣式樹
              </SectionHead>
              <StyleTree>
                <StyleRow $indent={0}>
                  <NodeIcon>{NODE_ICONS.style}</NodeIcon>
                  樣式 2
                </StyleRow>
                <StyleRow $indent={20}>
                  <NodeIcon>
                    <CurveNode />
                  </NodeIcon>
                  <NewMark>
                    <NewStar />
                  </NewMark>
                  CF-49
                </StyleRow>
              </StyleTree>
              <StampWide>专业打印</StampWide>
              <StampQQ>340047351</StampQQ>
            </SidePanel>
          </Side>
          <Viewport>
            <SceneDrawing />
            <Hint>插入模式</Hint>
            <FloatBar>
              {TOOL_ICONS.map((icon, i) => (
                <FloatBtn key={i} $pressed={i === 8 || i === 9}>
                  {icon}
                </FloatBtn>
              ))}
            </FloatBar>
            <Menu>
              {MENU.map((group, g) => (
                <React.Fragment key={g}>
                  {g > 0 && <MenuSep />}
                  {group.map((item) => (
                    <MenuItem key={item.label} $off={item.off}>
                      <Radio $hide={!item.radio} $on={item.on} />
                      {item.label}
                    </MenuItem>
                  ))}
                </React.Fragment>
              ))}
            </Menu>
            <Pointer width="14" height="20" viewBox="0 0 14 20">
              <path d="M1 1V15L4.500 12L7 18L10 17L7.500 11.500H12Z" fill="#fff" stroke="#1c2430" />
            </Pointer>
            <Watermark>
              <BrandLogo width="58" height="57" viewBox="0 0 58 57">
                <g fill="none" strokeWidth="3">
                  <path d="M2 10C6 0 18 2 28 10C38 18 42 30 36 38" stroke="#7fa3b8" strokeOpacity=".8" />
                  <path d="M2 10C4 18 12 26 24 28" stroke="#dfe9ee" strokeOpacity=".8" />
                  <path d="M34 30C38 20 50 14 54 24C58 38 44 54 32 55L28 53" stroke="#c08088" strokeOpacity=".85" />
                  <path d="M8 42C12 32 26 26 28 34C30 44 18 48 8 42" stroke="#e6eef2" strokeWidth="2" />
                </g>
              </BrandLogo>
              <BrandName>野火论坛</BrandName>
              <BrandUrl>www.proewildfire.cn</BrandUrl>
            </Watermark>
          </Viewport>
        </Body>
      </Page>
    </>
  );
};

export default App;
